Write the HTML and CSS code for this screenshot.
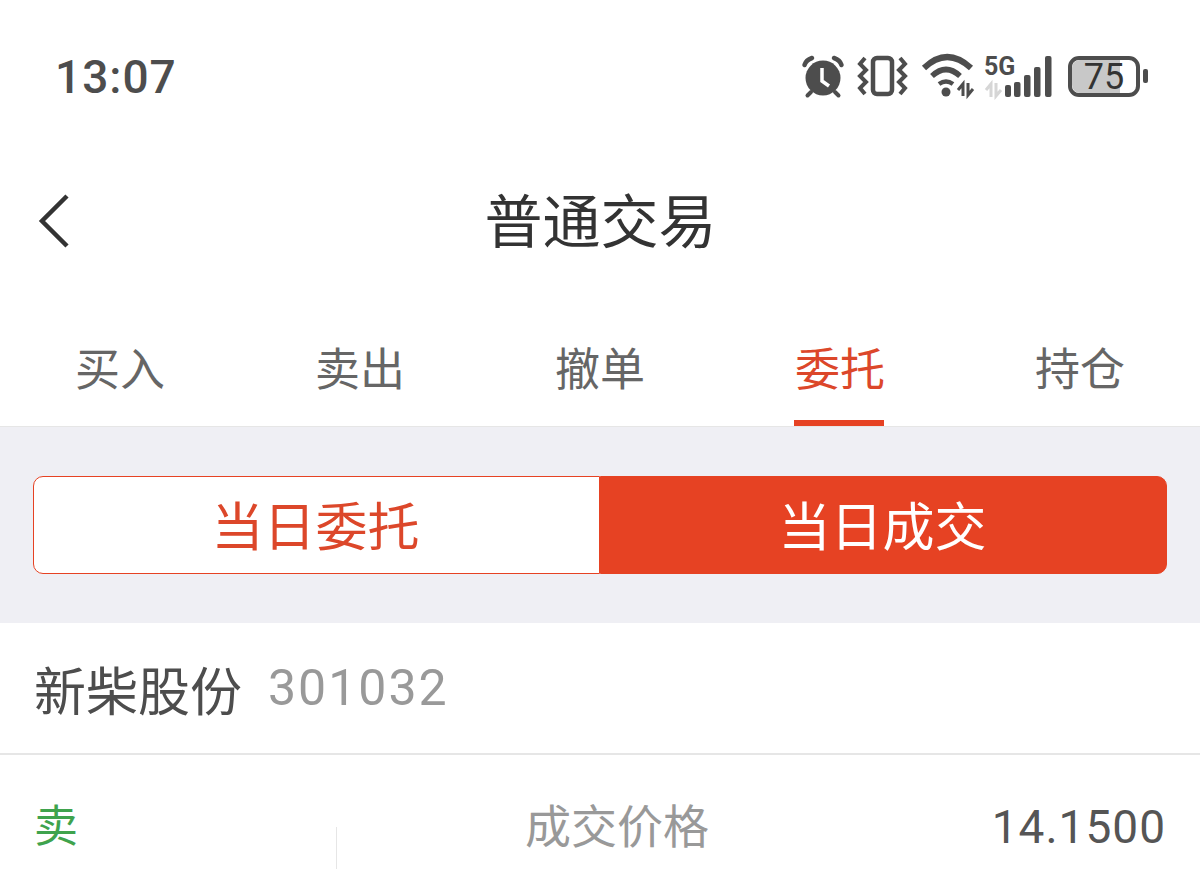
FILE: index.html
```html
<!DOCTYPE html>
<html lang="zh-CN">
<head>
    <meta charset="UTF-8">
    <title>普通交易</title>
    <link rel="stylesheet" href="styles.css">
</head>
<body>
    <div class="status-bar">
        <span class="clock">13:07</span>
        <svg class="status-icons" width="350" height="50" viewBox="0 0 350 50">
            <!-- будильник -->
            <circle cx="23" cy="28" r="17.5" fill="#4d4d4d"/>
            <path d="M4.5 15 Q6 10 12 8 M41.5 15 Q40 10 34 8" fill="none" stroke="#4d4d4d" stroke-width="4.5" stroke-linecap="round"/>
            <path d="M11 42 L7.5 45.5 M35 42 L38.5 45.5" stroke="#4d4d4d" stroke-width="4" stroke-linecap="round"/>
            <path d="M22 18 V31 L29 36" fill="none" stroke="#fff" stroke-width="3.5"/>
            <!-- вибрация -->
            <rect x="73" y="8" width="19" height="36" rx="4" fill="none" stroke="#4d4d4d" stroke-width="4.5"/>
            <path d="M65 8 L60 14 L66 20 L60 26 L66 32 L60 38 L65 44 M100 8 L105 14 L99 20 L105 26 L99 32 L105 38 L100 44" fill="none" stroke="#4d4d4d" stroke-width="4"/>
            <!-- wifi -->
            <path d="M124 18 Q147 -4 171 18" fill="none" stroke="#4d4d4d" stroke-width="6"/>
            <path d="M132 26 Q146 13 160 26" fill="none" stroke="#4d4d4d" stroke-width="5.5"/>
            <path d="M139 34 Q146 29 153 34" fill="none" stroke="#4d4d4d" stroke-width="4.5"/>
            <circle cx="146" cy="42" r="4.5" fill="#4d4d4d"/>
            <path d="M163 46 V34 L158 40 M168 33 V45 L173 39" fill="none" stroke="#4d4d4d" stroke-width="3"/>
            <!-- 5G и сеть -->
            <text class="net-label" x="184" y="25">5G</text>
            <path d="M191 47 V34 L186 40 M196 33 V46 L201 40" fill="none" stroke="#d6d6d6" stroke-width="3"/>
            <g fill="#4d4d4d">
                <rect x="205" y="35" width="6" height="12" rx="2"/>
                <rect x="214" y="32" width="6.5" height="15" rx="2"/>
                <rect x="224" y="25" width="6.5" height="22" rx="2"/>
                <rect x="234" y="17" width="6.5" height="30" rx="2"/>
                <rect x="245" y="6" width="6.5" height="41" rx="2"/>
            </g>
            <!-- батарея -->
            <rect x="270" y="8" width="68" height="37" rx="9" fill="#fff" stroke="#4d4d4d" stroke-width="4"/>
            <path d="M272 18 a8 8 0 0 1 8-8 H320 V43 H280 a8 8 0 0 1-8-8 Z" fill="#c8c8c8"/>
            <rect x="343" y="19" width="5" height="14" rx="2" fill="#4d4d4d"/>
            <text class="battery-label" x="304" y="39">75</text>
        </svg>
    </div>

    <header class="nav-bar">
        <svg class="back-icon" width="32" height="54" viewBox="0 0 32 54">
            <path d="M29 2 L4 27 L29 52" fill="none" stroke="#333" stroke-width="4.5"/>
        </svg>
        <h1 class="nav-title">普通交易</h1>
    </header>

    <nav class="tabs">
        <div class="tab">买入</div>
        <div class="tab">卖出</div>
        <div class="tab">撤单</div>
        <div class="tab active">委托</div>
        <div class="tab">持仓</div>
    </nav>

    <section class="filter-band">
        <div class="segmented">
            <div class="segment">当日委托</div>
            <div class="segment selected">当日成交</div>
        </div>
    </section>

    <div class="stock-row">
        <span class="stock-name">新柴股份</span>
        <span class="stock-code">301032</span>
    </div>

    <div class="deal-row">
        <div class="deal-side">卖</div>
        <div class="deal-cell">
            <span class="deal-label">成交价格</span>
            <span class="deal-value">14.1500</span>
        </div>
    </div>
</body>
</html>
```

FILE: styles.css
```css
:root {
    --accent: #e64223;
    --accent-text: #dc472a;
    --text-dark: #333333;
    --text-mid: #666666;
    --text-light: #999999;
    --line: #e6e6e6;
}

* {
    box-sizing: border-box;
    margin: 0;
    padding: 0;
}

html, body {
    height: 869px;
    overflow: hidden;
}

body {
    background: #ffffff;
    color: var(--text-dark);
    font-family: "Roboto", "Noto Sans CJK SC", sans-serif;
}

.status-bar {
    height: 152px;
    padding: 50px 50px 0 55px;
    display: flex;
    justify-content: space-between;
    align-items: flex-start;
}

.clock {
    font-size: 46px;
    line-height: 54px;
    font-weight: 500;
    color: #4d4d4d;
    letter-spacing: 1px;
}

.status-icons {
    display: block;
}

.net-label {
    font-family: "Roboto", sans-serif;
    font-size: 25px;
    font-weight: 700;
    fill: #4d4d4d;
}

.battery-label {
    font-family: "Roboto", sans-serif;
    font-size: 36px;
    font-weight: 400;
    fill: #333333;
    text-anchor: middle;
}

.nav-bar {
    height: 138px;
    display: grid;
    grid-template-columns: 1fr auto 1fr;
    align-items: center;
    padding-left: 38px;
    padding-right: 37px;
}

.nav-title {
    font-size: 58px;
    line-height: 72px;
    font-weight: 400;
    color: var(--text-dark);
    padding-top: 3px;
}

.tabs {
    height: 137px;
    display: flex;
    border-bottom: 1px solid var(--line);
}

.tab {
    flex: 1;
    position: relative;
    text-align: center;
    font-size: 45px;
    line-height: 60px;
    padding-top: 51px;
    color: var(--text-mid);
}

.tab.active {
    color: var(--accent-text);
}

.tab.active::after {
    content: "";
    position: absolute;
    left: 74px;
    right: 76px;
    bottom: 0;
    height: 6px;
    background: var(--accent);
}

.filter-band {
    height: 196px;
    background: #efeff4;
    padding: 49px 33px 0;
}

.segmented {
    display: flex;
    height: 98px;
    width: 1134px;
}

.segment {
    flex: 1;
    display: flex;
    align-items: center;
    justify-content: center;
    font-size: 52px;
    padding: 0 2px 3px 0;
    color: var(--accent-text);
    background: #ffffff;
    border: 1px solid var(--accent);
    border-radius: 10px 0 0 10px;
}

.segment.selected {
    color: #ffffff;
    background: var(--accent);
    border-radius: 0 10px 10px 0;
}

.stock-row {
    height: 132px;
    padding: 0 34px;
    display: flex;
    align-items: center;
    gap: 26px;
    border-bottom: 2px solid var(--line);
}

.stock-name {
    font-size: 52px;
    color: #4d4d4d;
}

.stock-code {
    font-size: 50px;
    color: var(--text-light);
    letter-spacing: 2px;
}

.deal-row {
    display: flex;
    align-items: center;
    height: 146px;
    padding-bottom: 2px;
}

.deal-side {
    width: 336px;
    padding-left: 34px;
    font-size: 44px;
    line-height: 60px;
    color: #3fa34d;
}

.deal-cell {
    flex: 1;
    display: flex;
    justify-content: space-between;
    position: relative;
    padding: 0 34px 0 189px;
    font-size: 46px;
    line-height: 60px;
}

.deal-cell::before {
    content: "";
    position: absolute;
    left: 0;
    top: 30px;
    height: 60px;
    border-left: 1px solid var(--line);
}

.deal-label {
    color: var(--text-light);
}

.deal-value {
    color: #555555;
    letter-spacing: 1px;
}
```
